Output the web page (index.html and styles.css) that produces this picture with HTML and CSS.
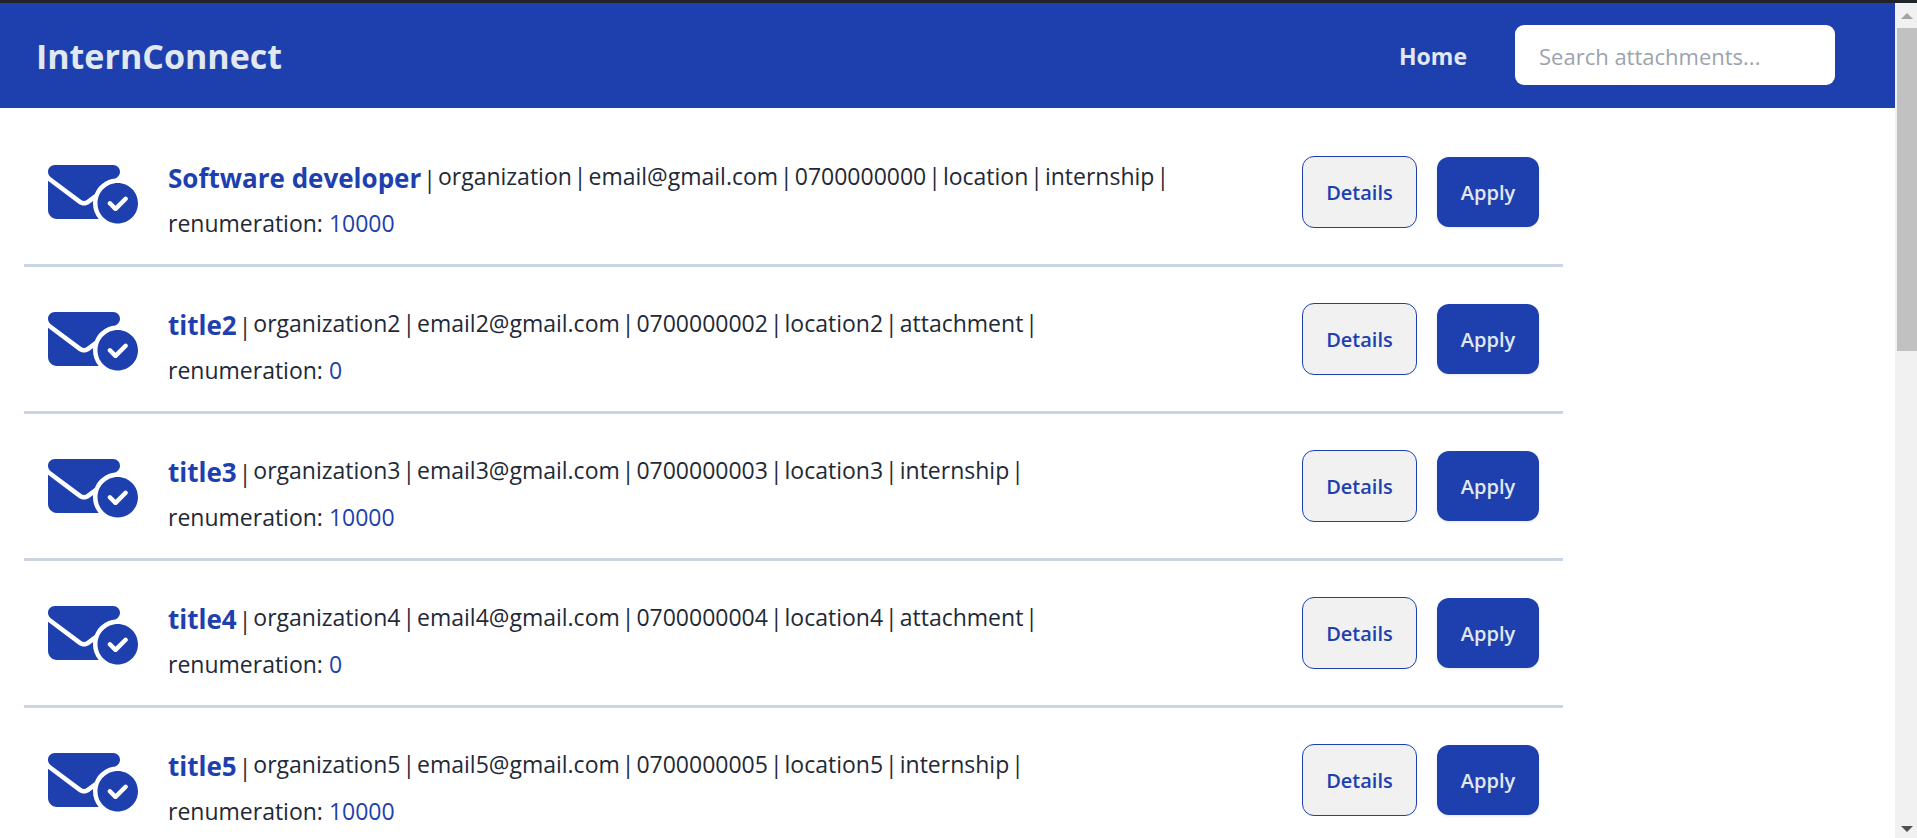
FILE: index.html
```html
<!DOCTYPE html>
<html lang="en">
<head>
<meta charset="utf-8">
<title>InternConnect</title>
<link rel="stylesheet" href="styles.css">
</head>
<body>
<svg class="sprite" aria-hidden="true">
  <symbol id="mail-check" viewBox="0 0 640 512"><path d="M48 64C21.500 64 0 85.500 0 112c0 15.100 7.100 29.300 19.200 38.400L236.800 313.600c11.400 8.500 27 8.500 38.400 0l57.400-43c23.900-59.800 79.700-103.300 146.300-109.800l13.900-10.400c12.100-9.100 19.200-23.300 19.200-38.400c0-26.500-21.500-48-48-48H48zM294.400 339.200c-22.800 17.100-54 17.100-76.800 0L0 176V384c0 35.300 28.700 64 64 64H360.200C335.100 417.600 320 378.500 320 336c0-5.600 .3-11.100 .8-16.600l-26.400 19.800zM640 336c0-79.500-64.500-144-144-144s-144 64.500-144 144s64.500 144 144 144s144-64.500 144-144zm-76.700-43.300c6.200 6.200 6.200 16.400 0 22.600l-72 72c-6.200 6.200-16.400 6.200-22.600 0l-40-40c-6.200-6.200-6.200-16.400 0-22.600s16.400-6.200 22.600 0L480 353.400l60.700-60.700c6.200-6.200 16.400-6.200 22.600 0z"/></symbol>
</svg>
<div class="window">
  <div class="page">
    <header class="navbar">
      <a class="brand" href="#">InternConnect</a>
      <nav class="nav">
        <a class="nav-link" href="#">Home</a>
        <input class="search" type="search" placeholder="Search attachments..." aria-label="Search attachments">
      </nav>
    </header>
    <main class="content">
      <ul class="listings">
        <li class="listing">
          <svg class="listing-icon" aria-hidden="true"><use href="#mail-check"/></svg>
          <div class="listing-text">
            <div class="summary"><h2 class="title">Software developer</h2><span class="divider">|</span><div class="meta"><span>organization</span><span>|</span><span>email@gmail.com</span><span>|</span><span>0700000000</span><span>|</span><span>location</span><span>|</span><span>internship</span><span>|</span></div></div>
            <p class="pay">renumeration: <span class="amount">10000</span></p>
          </div>
          <div class="actions"><button class="btn details" type="button">Details</button><button class="btn apply" type="button">Apply</button></div>
        </li>
        <li class="listing">
          <svg class="listing-icon" aria-hidden="true"><use href="#mail-check"/></svg>
          <div class="listing-text">
            <div class="summary"><h2 class="title">title2</h2><span class="divider">|</span><div class="meta"><span>organization2</span><span>|</span><span>email2@gmail.com</span><span>|</span><span>0700000002</span><span>|</span><span>location2</span><span>|</span><span>attachment</span><span>|</span></div></div>
            <p class="pay">renumeration: <span class="amount">0</span></p>
          </div>
          <div class="actions"><button class="btn details" type="button">Details</button><button class="btn apply" type="button">Apply</button></div>
        </li>
        <li class="listing">
          <svg class="listing-icon" aria-hidden="true"><use href="#mail-check"/></svg>
          <div class="listing-text">
            <div class="summary"><h2 class="title">title3</h2><span class="divider">|</span><div class="meta"><span>organization3</span><span>|</span><span>email3@gmail.com</span><span>|</span><span>0700000003</span><span>|</span><span>location3</span><span>|</span><span>internship</span><span>|</span></div></div>
            <p class="pay">renumeration: <span class="amount">10000</span></p>
          </div>
          <div class="actions"><button class="btn details" type="button">Details</button><button class="btn apply" type="button">Apply</button></div>
        </li>
        <li class="listing">
          <svg class="listing-icon" aria-hidden="true"><use href="#mail-check"/></svg>
          <div class="listing-text">
            <div class="summary"><h2 class="title">title4</h2><span class="divider">|</span><div class="meta"><span>organization4</span><span>|</span><span>email4@gmail.com</span><span>|</span><span>0700000004</span><span>|</span><span>location4</span><span>|</span><span>attachment</span><span>|</span></div></div>
            <p class="pay">renumeration: <span class="amount">0</span></p>
          </div>
          <div class="actions"><button class="btn details" type="button">Details</button><button class="btn apply" type="button">Apply</button></div>
        </li>
        <li class="listing">
          <svg class="listing-icon" aria-hidden="true"><use href="#mail-check"/></svg>
          <div class="listing-text">
            <div class="summary"><h2 class="title">title5</h2><span class="divider">|</span><div class="meta"><span>organization5</span><span>|</span><span>email5@gmail.com</span><span>|</span><span>0700000005</span><span>|</span><span>location5</span><span>|</span><span>internship</span><span>|</span></div></div>
            <p class="pay">renumeration: <span class="amount">10000</span></p>
          </div>
          <div class="actions"><button class="btn details" type="button">Details</button><button class="btn apply" type="button">Apply</button></div>
        </li>
      </ul>
    </main>
  </div>
  <div class="scrollbar" aria-hidden="true">
    <svg class="arrow up" viewBox="0 0 12 6"><path d="M6 0l6 6H0z"/></svg>
    <div class="track"><div class="thumb"></div></div>
    <svg class="arrow down" viewBox="0 0 12 6"><path d="M0 0h12L6 6z"/></svg>
  </div>
</div>
</body>
</html>
```
FILE: styles.css
```css
* { box-sizing: border-box; }

:root {
  --blue: #1e40af;
  --light: #e2e8f0;
  --ink: #1f2937;
}

body {
  margin: 0;
  height: 100vh;
  overflow: hidden;
  background: #fff;
  color: var(--ink);
  font-family: "Open Sans", "Noto Sans", sans-serif;
  font-size: 23px;
}

.sprite { display: none; }

.window {
  display: flex;
  height: 100%;
  border-top: 3px solid #212529;
}

.page {
  flex: 1;
  min-width: 0;
  overflow: hidden;
}

.navbar {
  display: flex;
  align-items: center;
  justify-content: space-between;
  padding: 22px 60px 23px 36px;
  background: var(--blue);
}

.brand, .nav-link {
  padding-top: 2px;
  color: var(--light);
  font-weight: 700;
  text-decoration: none;
}

.brand { font-size: 34px; line-height: 50px; }

.nav {
  display: flex;
  align-items: center;
  gap: 48px;
}

.search {
  width: 320px;
  height: 60px;
  padding: 2px 24px 0;
  border: 0;
  border-radius: 9px;
  background: #fff;
  color: var(--ink);
  font: inherit;
  font-size: 22px;
}

.search::placeholder { color: #9ca3af; }

.content {
  display: grid;
  grid-template-columns: 5fr 1fr;
  padding: 12px 24px;
}

.listings {
  margin: 0;
  padding: 0;
  list-style: none;
}

.listing {
  display: flex;
  align-items: center;
  padding: 24px;
  border-bottom: 3px solid #cbd5e1;
}

.listing-icon {
  flex: none;
  width: 90px;
  height: 72px;
  margin-right: 30px;
  fill: var(--blue);
}

.listing-text {
  flex: 1;
  padding-top: 20px;
}

.summary {
  display: flex;
  align-items: flex-start;
  gap: 2px;
  height: 42px;
}

.title {
  margin: 0;
  color: var(--blue);
  font-size: 26px;
  font-weight: 700;
  line-height: 28px;
}

.divider { line-height: 30px; }

.meta {
  display: flex;
  gap: 2px;
  line-height: 24px;
}

.pay {
  margin: 0;
  line-height: 34px;
}

.amount { color: var(--blue); }

.actions {
  display: flex;
  align-items: center;
  gap: 20px;
}

.btn {
  height: 70px;
  padding: 0 24px;
  border: 0;
  border-radius: 12px;
  font: inherit;
  font-size: 20px;
  font-weight: 600;
}

.details {
  height: 72px;
  padding: 0 23px;
  border: 1px solid var(--blue);
  background: #f1f1f1;
  color: var(--blue);
}

.apply {
  background: var(--blue);
  color: var(--light);
  box-shadow: 0 1px 3px rgba(0, 0, 0, 0.1);
}

.scrollbar {
  display: flex;
  flex-direction: column;
  align-items: center;
  width: 22px;
  padding: 10px 0 6px;
  background: #f1f1f1;
}

.arrow { width: 12px; height: 6px; margin-left: 2px; }
.up { fill: #a3a3a3; }
.down { fill: #505050; }

.track {
  flex: 1;
  align-self: stretch;
  margin: 9px 0 9px 2px;
}

.thumb {
  height: 41%;
  background: #c1c1c1;
}
```
